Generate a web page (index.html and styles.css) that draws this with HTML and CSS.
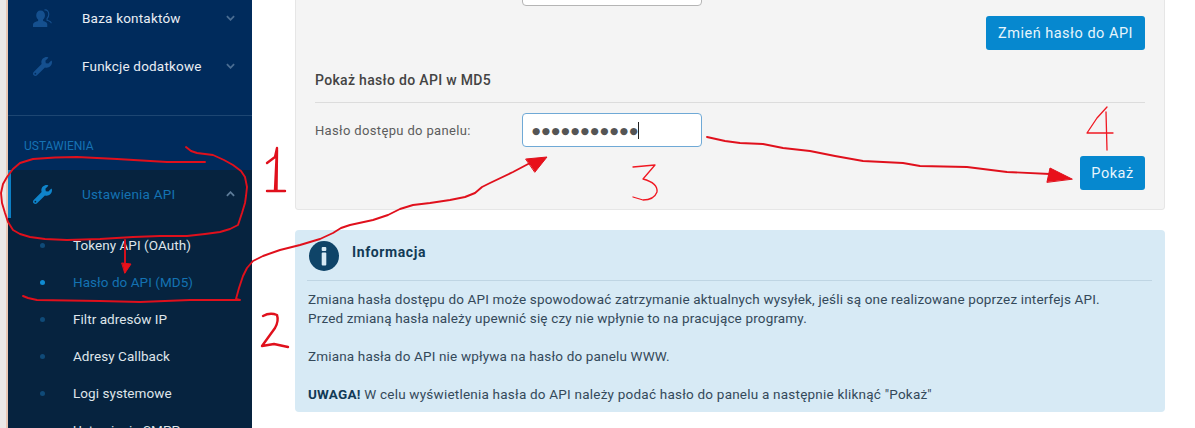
FILE: index.html
```html
<!DOCTYPE html>
<html lang="pl">
<head>
<meta charset="utf-8">
<title>Hasło do API</title>
<link rel="stylesheet" href="styles.css">
</head>
<body>
<svg width="0" height="0" class="defs">
  <defs>
    <path id="wrench" d="M507.73 109.1c-2.24-9.03-13.54-12.09-20.12-5.51l-74.36 74.36-67.88-11.31-11.31-67.88 74.36-74.36c6.62-6.62 3.43-17.9-5.66-20.16-47.38-11.74-99.55.91-136.58 37.93-39.64 39.64-50.55 97.1-34.05 147.2L18.74 402.76c-24.99 24.99-24.99 65.51 0 90.5 24.99 24.99 65.51 24.99 90.5 0l213.21-213.21c50.12 16.71 107.47 5.68 147.37-34.22 37.07-37.07 49.7-89.32 37.91-136.73zM64 472c-13.25 0-24-10.75-24-24 0-13.26 10.75-24 24-24s24 10.74 24 24c0 13.25-10.75 24-24 24z"/>
  </defs>
</svg>
<div class="page">
  <div class="strip"></div>
  <aside class="sidebar">
    <nav class="top-nav">
      <a class="item">
        <svg class="ico" viewBox="0 0 20 20"><path d="M8 1.500c3 0 4.600 2.200 4.600 5 0 2-.8 3.600-2 4.600v1.400c2.500.7 4.400 1.600 4.400 3.200V19H0v-2.800c0-1.800 2.900-3 5.400-3.700v-1.400C4.200 10.100 3.400 8.500 3.400 6.500c0-2.800 1.600-5 4.600-5z"/><path class="back" d="M12 1c2.800-.6 4.600 1.600 4.600 4.600 0 2-.7 3.500-1.800 4.500v1.700c2.300.7 4.400 1.400 4.400 3.200"/></svg>
        <span class="label">Baza kontaktów</span>
        <svg class="chev" viewBox="0 0 10 6"><path d="M1 1l4 4 4-4"/></svg>
      </a>
      <a class="item">
        <svg class="ico" viewBox="0 0 512 512"><use href="#wrench"/></svg>
        <span class="label">Funkcje dodatkowe</span>
        <svg class="chev" viewBox="0 0 10 6"><path d="M1 1l4 4 4-4"/></svg>
      </a>
    </nav>
    <div class="settings-head">USTAWIENIA</div>
    <div class="active-group">
      <a class="item item-active">
        <svg class="ico" viewBox="0 0 512 512"><use href="#wrench"/></svg>
        <span class="label">Ustawienia API</span>
        <svg class="chev" viewBox="0 0 10 6"><path d="M1 5l4-4 4 4"/></svg>
      </a>
      <ul class="sub">
        <li>Tokeny API (OAuth)</li>
        <li class="current">Hasło do API (MD5)</li>
        <li>Filtr adresów IP</li>
        <li>Adresy Callback</li>
        <li>Logi systemowe</li>
        <li>Ustawienia SMPP</li>
      </ul>
    </div>
  </aside>
  <main class="main">
    <section class="card">
      <input class="field field-top" type="text" aria-label="Hasło">
      <div class="btn-row"><button class="btn">Zmień hasło do API</button></div>
      <h2 class="card-title">Pokaż hasło do API w MD5</h2>
      <div class="form-row">
        <label class="form-label">Hasło dostępu do panelu:</label>
        <div class="field field-focus"><span class="dots">●●●●●●●●●●●</span><span class="caret"></span></div>
      </div>
      <div class="btn-row btn-row-show"><button class="btn">Pokaż</button></div>
    </section>
    <section class="info">
      <header class="info-head">
        <svg class="info-ico" viewBox="0 0 30 30"><circle cx="15" cy="15" r="15"/><rect class="i" x="12.700" y="6" width="4.600" height="4" rx="1"/><rect class="i" x="12.700" y="11.500" width="4.600" height="13" rx="1"/></svg>
        <h3 class="info-title">Informacja</h3>
      </header>
      <div class="info-body">
        <p>Zmiana hasła dostępu do API może spowodować zatrzymanie aktualnych wysyłek, jeśli są one realizowane poprzez interfejs API.<br>Przed zmianą hasła należy upewnić się czy nie wpłynie to na pracujące programy.</p>
        <p>Zmiana hasła do API nie wpływa na hasło do panelu WWW.</p>
        <p class="note"><strong>UWAGA!</strong> W celu wyświetlenia hasła do API należy podać hasło do panelu a następnie kliknąć "Pokaż"</p>
      </div>
    </section>
  </main>
</div>
<svg class="scribbles" width="1195" height="428" viewBox="0 0 1195 428">
  <g class="ink">
    <path d="M186 147L191 151L197 153L213 155L224 160L233 165L241 171L245 177L247 187L246 196L245 203L242 213L238 225L230 229L220 232L205 234L187 236L160 236L133 237L100 239L67 240L45 239L30 237L20 234L13 230L8 222L5 213L2 203L1 193L3 184L7 177L13 169L20 163L33 159L55 157.500L77 157L117 159L167 162L205 162"/>
    <path d="M125 240L125 272"/>
    <path class="fill" d="M122 263L131 264L125 273Z"/>
    <path d="M23 296L28 298L37 300L100 301L140 302L190 300L240 300L236 299L239 288L243 276L247 268L253 261L263 256L280 250L300 245L320 239L333 233L341 228L350 225L373 220L388 215L400 209L413 205L430 203L450 200L465 197L475 193L482 187L490 183L513 172L530 163"/>
    <path class="fill" d="M526 159L547 157L535 172Z"/>
    <path class="bold" d="M267 163L275 157L277 148L275 190M277 150L276.500 190M267 191L285 191"/>
    <path class="bold" d="M263 316Q270 312 277 315Q279 321 275 328L262 346L274 344L288 347"/>
    <path class="thin" d="M633 167L655 165L643 179Q658 183 657 192Q654 200 643 200L633 197"/>
    <path class="thin" d="M1107 107L1097 118L1087 133L1113 133M1106 112L1107 150"/>
    <path d="M707 137L725 141L740 143L763 144L783 148L810 151L835 156L863 161L903 163L920 166L967 167L1007 172L1050 174"/>
    <path class="fill" d="M1047 182L1050 168L1072 179Z"/>
  </g>
</svg>
</body>
</html>
```
FILE: styles.css
```css
* { box-sizing: border-box; }
html, body { margin: 0; height: 428px; overflow: hidden; background: #fff; }
body { font-family: Roboto, "Liberation Sans", sans-serif; font-size: 13px; color: #444; }
.defs { position: absolute; }
.page { display: flex; height: 428px; overflow: hidden; }
.strip { width: 8px; flex: none; background: #ebe8e7; border-right: 2px solid #e8c8b6; }
.sidebar { width: 244px; height: 428px; flex: none; overflow: hidden; background: #002b5c; }
.top-nav { margin-top: -6px; padding-bottom: 25px; border-bottom: 1px solid #1d4672; }
.item { display: flex; align-items: center; height: 48px; padding-left: 25px; }
.ico { width: 19px; height: 19px; flex: none; fill: #15508f; margin-right: 30px; }
.ico .back { fill: none; stroke: #15508f; stroke-width: 1.200; }
.label { flex: 1; color: #e9eef4; font-size: 13.5px; letter-spacing: .2px; }
.chev { width: 9px; height: 6px; flex: none; margin-right: 17px; fill: none; stroke: #4a6d92; stroke-width: 2; }
.settings-head { height: 54px; padding: 22px 0 0 16px; color: #1672b4; font-size: 12px; line-height: 16px; }
.active-group { background: #06233f; height: 260px; }
.item-active { height: 48px; border-left: 3px solid #0c7fc4; padding-left: 22px; }
.item-active .ico { fill: #0f84ca; }
.item-active .label { color: #1472b2; }
.item-active .chev { stroke: #5d7c99; }
.sub { list-style: none; margin: 0; padding: 9px 0 0 65px; }
.sub li { position: relative; height: 37px; line-height: 37px; color: #dfe5ea; font-size: 13.5px; letter-spacing: .05px; }
.sub li::before { content: ""; position: absolute; left: -33px; top: 16px; width: 5px; height: 5px; border-radius: 50%; background: #0f4a78; }
.sub .current { color: #1472b2; }
.sub .current::before { background: #0f8bd2; }
.main { width: 870px; margin-left: 43px; flex: none; }
.card { margin-top: -20px; height: 230px; padding: 0 19px; background: #f4f4f4; border: 1px solid #e6e6e6; border-radius: 3px; }
.field { display: block; width: 180px; height: 34px; background: #fff; border: 1px solid #b5b5b5; border-radius: 4px; }
.field-top { margin: -9px 0 0 207px; }
.btn-row { display: flex; justify-content: flex-end; margin-top: 10px; }
.btn { height: 34px; padding: 0; width: 159px; border: 0; border-radius: 3px; background: #0688cf; color: #e6f5fc; font: 14.500px Roboto, sans-serif; letter-spacing: .5px; }
.card-title { margin: 20px 0 0; height: 33px; border-bottom: 1px solid #dcdcdc; font-size: 14px; font-weight: 500; line-height: 20px; color: #444; letter-spacing: .32px; }
.form-row { display: flex; align-items: center; margin-top: 10px; }
.form-label { width: 207px; font-size: 13px; letter-spacing: .35px; color: #5c5c5c; }
.field-focus { display: flex; align-items: center; padding-left: 9px; border-color: #6fa9d6; }
.dots { font: 9.500px "DejaVu Sans", sans-serif; color: #555; letter-spacing: 1.450px; }
.caret { width: 1px; height: 17px; background: #222; margin-left: -1px; }
.btn-row-show { margin-top: 9px; }
.btn-row-show .btn { width: 65px; }
.info { height: 182px; margin-top: 20px; padding: 10px 13px 0 13px; background: #d7eaf5; border-radius: 4px; }
.info-head { display: flex; align-items: center; height: 41px; margin-left: -1px; border-bottom: 1px solid #bfd5e3; }
.info-ico { width: 30px; height: 30px; flex: none; margin: -9px 13px 0 2px; }
.info-ico circle { fill: #0f4468; }
.info-ico .i { fill: #d7eaf5; }
.info-title { margin: -17px 0 0; font-size: 14px; font-weight: 700; color: #123a56; letter-spacing: .6px; }
.info-body { padding-top: 9px; font-size: 13.500px; line-height: 19px; color: #34495a; letter-spacing: .16px; }
.info-body p { margin: 0 0 19px; }
.info-body .note { letter-spacing: .22px; }
.info-body strong { color: #123a56; }
.scribbles { position: absolute; left: 0; top: 0; pointer-events: none; }
.ink path { fill: none; stroke: #e0101c; stroke-width: 1.900; stroke-linejoin: round; stroke-linecap: round; }
.ink .bold { stroke-width: 2.400; }
.ink .thin { stroke-width: 1.300; stroke: #f01822; }
.ink .fill { fill: #e8101a; stroke-width: 1; }
```
